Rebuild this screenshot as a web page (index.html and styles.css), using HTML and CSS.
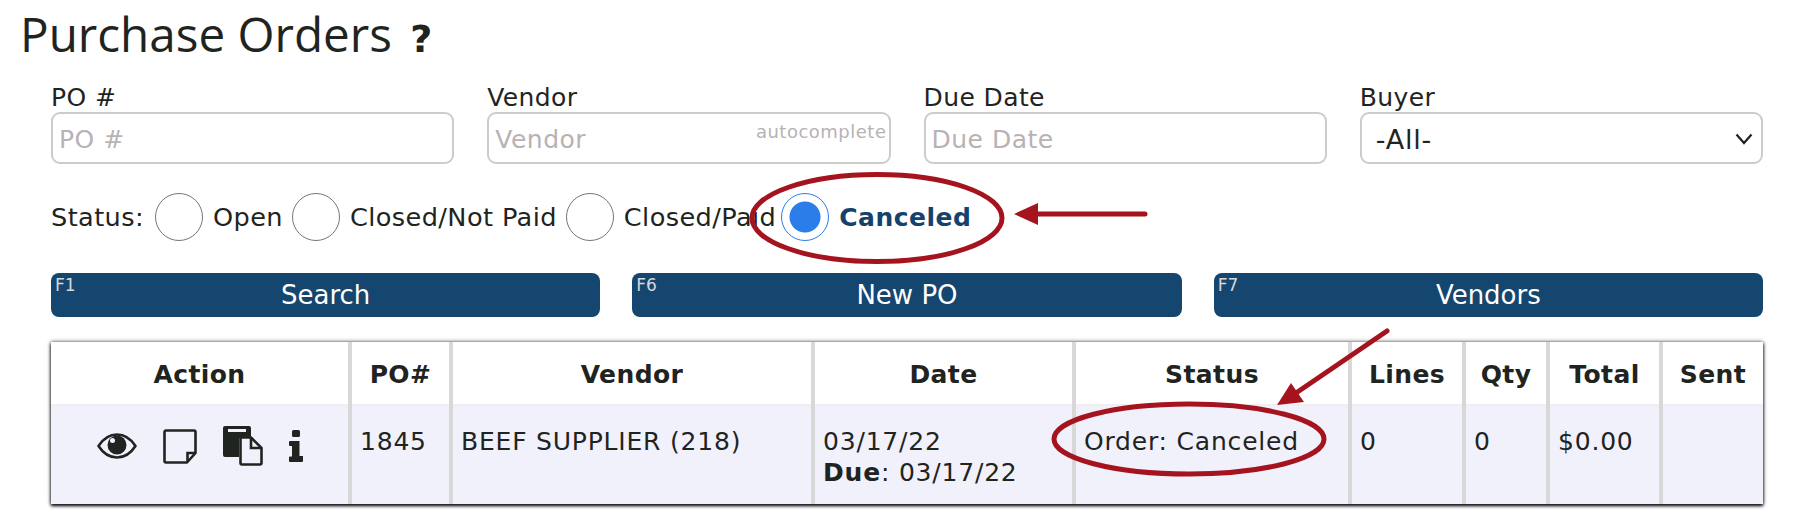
FILE: index.html
```html
<!DOCTYPE html>
<html lang="en">
<head>
  <meta charset="UTF-8" />
  <title>Purchase Orders</title>
  <link rel="stylesheet" href="styles.css">
</head>
<body>
  <div class="page">
    <h1 class="title">Purchase Orders <span class="help">?</span></h1>

    <div class="filters">
      <div class="field">
        <label for="po">PO #</label>
        <input type="text" id="po" placeholder="PO #" />
      </div>
      <div class="field">
        <label for="vendor">Vendor</label>
        <input type="text" id="vendor" placeholder="Vendor" />
        <span class="hint">autocomplete</span>
      </div>
      <div class="field">
        <label for="due">Due Date</label>
        <input type="text" id="due" placeholder="Due Date" />
      </div>
      <div class="field">
        <label for="buyer">Buyer</label>
        <select id="buyer"><option>-All-</option></select>
        <svg class="chevron" width="18" height="12" viewBox="0 0 18 12">
          <path d="M1.500 1.500L9 10L16.500 1.500" fill="none" stroke="#1f2421" stroke-width="2.200"/>
        </svg>
      </div>
    </div>

    <div class="status-row">
      <span class="status-label">Status:</span>
      <label class="opt"><input type="radio" name="status" /> Open</label>
      <label class="opt"><input type="radio" name="status" /> Closed/Not Paid</label>
      <label class="opt"><input type="radio" name="status" /> Closed/Paid</label>
      <label class="opt picked"><input type="radio" name="status" checked /> Canceled</label>
    </div>

    <div class="buttons">
      <button><span class="fkey">F1</span>Search</button>
      <button><span class="fkey">F6</span>New PO</button>
      <button><span class="fkey">F7</span>Vendors</button>
    </div>

    <table class="orders">
      <colgroup>
        <col class="c-action"><col class="c-po"><col class="c-vendor"><col class="c-date"><col class="c-status">
        <col class="c-lines"><col class="c-qty"><col class="c-total"><col class="c-sent">
      </colgroup>
      <thead>
        <tr>
          <th>Action</th><th>PO#</th><th>Vendor</th><th>Date</th><th>Status</th>
          <th>Lines</th><th>Qty</th><th>Total</th><th>Sent</th>
        </tr>
      </thead>
      <tbody>
        <tr>
          <td>
            <div class="actions">
              <svg width="40" height="26" viewBox="0 0 40 26">
                <path d="M1.500 13C6 6 12.500 1.500 20 1.500S34 6 38.500 13C34 20 27.500 24.500 20 24.500S6 20 1.500 13Z" fill="none" stroke="#1f2421" stroke-width="2.600" stroke-linejoin="round"/>
                <circle cx="20" cy="12" r="9.500" fill="#1f2421"/>
                <circle cx="15.500" cy="7.500" r="2.500" fill="#f1f1fc"/>
              </svg>
              <svg width="34" height="35" viewBox="0 0 34 35">
                <path d="M3 1.500H31A1.500 1.500 0 0 1 32.500 3V24L24 33.500H3A1.500 1.500 0 0 1 1.500 32V3A1.500 1.500 0 0 1 3 1.500Z" fill="none" stroke="#1f2421" stroke-width="2.600" stroke-linejoin="round"/>
                <path d="M32 24H24.500V33" fill="none" stroke="#1f2421" stroke-width="2.600"/>
              </svg>
              <svg width="40" height="40" viewBox="0 0 40 40">
                <path d="M2 0H26A2 2 0 0 1 28 2V12H16V31H2A2 2 0 0 1 0 29V2A2 2 0 0 1 2 0Z" fill="#1f2421"/>
                <rect x="5" y="3" width="18" height="3" fill="#f1f1fc"/>
                <path d="M17.500 11.500H28L38.500 22V37A1.500 1.500 0 0 1 37 38.500H19A1.500 1.500 0 0 1 17.500 37Z" fill="#f1f1fc" stroke="#1f2421" stroke-width="2.600" stroke-linejoin="round"/>
                <path d="M28 12V22H38" fill="none" stroke="#1f2421" stroke-width="2.600"/>
              </svg>
              <svg width="14" height="32" viewBox="0 0 14 32">
                <rect x="3" y="0" width="8" height="7" rx="1.500" fill="#1f2421"/>
                <path d="M1 11H10.500V26H14V31A1 1 0 0 1 13 32H1A1 1 0 0 1 0 31V27.500A1 1 0 0 1 1 26.500H3V16H1A1 1 0 0 1 0 15V12A1 1 0 0 1 1 11Z" fill="#1f2421"/>
              </svg>
            </div>
          </td>
          <td>1845</td>
          <td>BEEF SUPPLIER (218)</td>
          <td>03/17/22<br><b>Due</b>: 03/17/22</td>
          <td>Order: Canceled</td>
          <td>0</td>
          <td>0</td>
          <td>$0.00</td>
          <td></td>
        </tr>
      </tbody>
    </table>
  </div>

  <!-- red callouts drawn over the screenshot -->
  <svg class="callouts" width="1800" height="518" viewBox="0 0 1800 518">
    <ellipse cx="877" cy="218" rx="125" ry="43.500" />
    <path d="M1145 214H1034" />
    <path class="head" d="M1014 214L1038 203V225Z" />
    <ellipse cx="1189" cy="439" rx="135" ry="35" />
    <path d="M1387 331L1296 393" />
    <path class="head" d="M1277 405L1291 383L1304 402Z" />
  </svg>
</body>
</html>
```

FILE: styles.css
```css
* {
  box-sizing: border-box;
}

body {
  margin: 0;
  background: #ffffff;
  color: #1f2421;
  font-family: "DejaVu Sans", Verdana, sans-serif;
  font-size: 24px;
}

.page {
  width: 1800px;
  height: 518px;
  padding: 0 37px 0 51px;
  overflow: hidden;
}

.title {
  margin: 0 0 0 -31px;
  font-family: "Open Sans", sans-serif;
  font-size: 47.600px;
  font-weight: 400;
  line-height: 68px;
  height: 83px;
}

.help {
  font-family: "DejaVu Sans", sans-serif;
  font-weight: bold;
  font-size: 38px;
  margin-left: 6px;
}

.filters {
  display: grid;
  grid-template-columns: repeat(4, 1fr);
  column-gap: 33px;
}

.field {
  position: relative;
}

.field label {
  display: block;
  height: 29px;
  line-height: 30px;
  font-size: 25px;
  letter-spacing: 0.4px;
}

.field input,
.field select {
  width: 100%;
  height: 52px;
  border: 2px solid #cccccc;
  border-radius: 9px;
  background: #ffffff;
  color: #1f2421;
  font-family: inherit;
  font-size: 25px;
  padding: 2px 6px 0;
  letter-spacing: 0.5px;
}

.field select {
  appearance: none;
  padding-left: 14px;
  font-size: 27px;
  letter-spacing: 0.8px;
}

.field input::placeholder {
  color: #b8b2b4;
  opacity: 1;
}

.hint {
  position: absolute;
  right: 4px;
  top: 38px;
  font-size: 18px;
  color: #b8b2b4;
  letter-spacing: 0.5px;
}

.chevron {
  position: absolute;
  right: 10px;
  top: 50px;
}

.status-row {
  display: flex;
  align-items: center;
  height: 48px;
  margin-top: 29px;
  font-size: 25.600px;
  letter-spacing: 0.4px;
}

.status-label {
  margin-right: 2px;
}

.opt {
  display: flex;
  align-items: center;
  margin-left: 9px;
}

.opt input {
  appearance: none;
  width: 48px;
  height: 48px;
  margin: 0 10px 0 0;
  border: 1.500px solid #7a7474;
  border-radius: 50%;
  background: #ffffff;
}

.opt input:checked {
  border-color: #2b7de9;
  background: radial-gradient(circle, #2b7de9 0 15px, #ffffff 16px);
}

.picked {
  color: #14426c;
  font-size: 25px;
  font-weight: bold;
  letter-spacing: 0.5px;
  margin-left: 5px;
}

.buttons {
  display: grid;
  grid-template-columns: repeat(3, 1fr);
  column-gap: 32px;
  margin-top: 32px;
}

.buttons button {
  position: relative;
  height: 44px;
  border: none;
  border-radius: 8px;
  background: #14466f;
  color: #ffffff;
  font-family: inherit;
  font-size: 26px;
  cursor: pointer;
}

.fkey {
  position: absolute;
  left: 4px;
  top: 2px;
  font-size: 17px;
  color: #d8d8d8;
}

.orders {
  width: 1712px;
  margin-top: 25px;
  table-layout: fixed;
  border-collapse: collapse;
  box-shadow: 0 2px 3px #111111, 0 0 4px #444444;
}

.c-action { width: 299px; }
.c-po { width: 101px; }
.c-vendor { width: 362px; }
.c-date { width: 261px; }
.c-status { width: 276px; }
.c-lines { width: 114px; }
.c-qty { width: 84px; }
.c-total { width: 113px; }
.c-sent { width: 102px; }

.orders th {
  height: 63px;
  padding: 3px 0 0;
  background: #ffffff;
  border-left: 4px solid #d8d8d8;
  font-size: 25px;
  letter-spacing: 0.4px;
}

.orders td {
  height: 99px;
  padding: 20px 8px 0;
  vertical-align: top;
  background: #f1f1fc;
  border-left: 4px solid #d8d8d8;
  border-top: 2px solid #f0eeee;
  font-size: 25px;
  line-height: 31px;
  letter-spacing: 0.8px;
}

.orders th:first-child,
.orders td:first-child {
  border-left: none;
}

.actions {
  display: flex;
  align-items: center;
  justify-content: center;
  gap: 26px;
}

.callouts {
  position: absolute;
  top: 0;
  left: 0;
  pointer-events: none;
  fill: none;
  stroke: #a5141e;
  stroke-width: 5;
  stroke-linecap: round;
}

.callouts .head {
  fill: #a5141e;
  stroke: none;
}
```
